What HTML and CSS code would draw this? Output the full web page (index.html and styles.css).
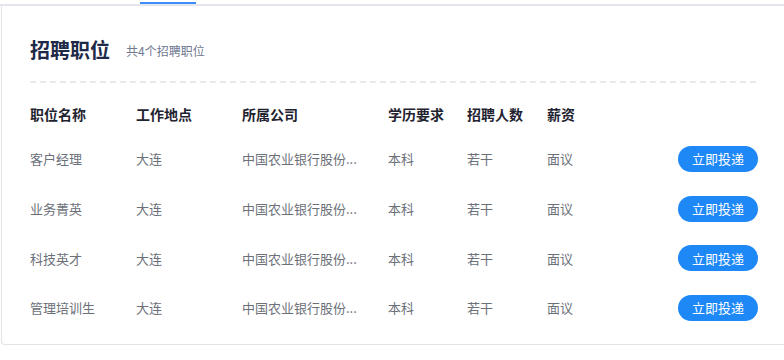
FILE: index.html
```html
<!DOCTYPE html>
<html lang="zh-CN">
<head>
<meta charset="utf-8">
<title>招聘职位</title>
<link rel="stylesheet" href="styles.css">
</head>
<body>
  <div class="tabbar">
    <span class="tab-indicator"></span>
  </div>
  <section class="card">
    <header class="card-head">
      <h2 class="card-title">招聘职位</h2>
      <span class="card-sub">共4个招聘职位</span>
    </header>
    <div class="divider"></div>
    <div class="jobs">
      <div class="row row-head">
        <span>职位名称</span>
        <span>工作地点</span>
        <span>所属公司</span>
        <span>学历要求</span>
        <span>招聘人数</span>
        <span>薪资</span>
        <span></span>
      </div>
      <div class="row">
        <span>客户经理</span>
        <span>大连</span>
        <span class="company" title="中国农业银行股份有限公司">中国农业银行股份...</span>
        <span>本科</span>
        <span>若干</span>
        <span>面议</span>
        <button class="apply">立即投递</button>
      </div>
      <div class="row">
        <span>业务菁英</span>
        <span>大连</span>
        <span class="company" title="中国农业银行股份有限公司">中国农业银行股份...</span>
        <span>本科</span>
        <span>若干</span>
        <span>面议</span>
        <button class="apply">立即投递</button>
      </div>
      <div class="row">
        <span>科技英才</span>
        <span>大连</span>
        <span class="company" title="中国农业银行股份有限公司">中国农业银行股份...</span>
        <span>本科</span>
        <span>若干</span>
        <span>面议</span>
        <button class="apply">立即投递</button>
      </div>
      <div class="row">
        <span>管理培训生</span>
        <span>大连</span>
        <span class="company" title="中国农业银行股份有限公司">中国农业银行股份...</span>
        <span>本科</span>
        <span>若干</span>
        <span>面议</span>
        <button class="apply">立即投递</button>
      </div>
    </div>
  </section>
</body>
</html>
```

FILE: styles.css
```css
* {
  box-sizing: border-box;
}

html, body {
  margin: 0;
  padding: 0;
  background: #fff;
  overflow: hidden;
}

body {
  font-family: "Noto Sans CJK SC", "Noto Sans", sans-serif;
  color: #333;
}

/* tab strip above the card */
.tabbar {
  height: 6px;
  padding-top: 2px;
  border-bottom: 2px solid #e4e6ef;
  padding-left: 140px;
}

.tab-indicator {
  display: block;
  width: 56px;
  height: 2px;
  background: #3d8ef7;
}

.card {
  width: 786px;
  margin-left: 1px;
  border: 1px solid #e3e3e3;
  border-top: none;
  border-radius: 0 0 4px 4px;
  padding: 30px 29px 11px 28px;
}

.card-head {
  display: flex;
  align-items: center;
  gap: 16px;
  height: 28px;
}

.card-title {
  margin: 0;
  font-size: 20px;
  line-height: 28px;
  font-weight: 700;
  color: #1e2a48;
}

.card-sub {
  font-size: 12px;
  color: #6f7890;
}

.divider {
  margin-top: 17px;
  height: 2px;
  width: 728px;
  background: repeating-linear-gradient(to right, #e7e9ed 0 6px, transparent 6px 10px);
}

.jobs {
  width: 728px;
  margin-top: 11px;
}

.row {
  display: grid;
  grid-template-columns: 106px 106px 146px 79px 80px 1fr 80px;
  align-items: center;
  height: 49.7px;
  font-size: 13px;
  color: #6c7079;
}

.row-head {
  height: 40px;
  font-size: 14px;
  font-weight: 700;
  color: #1f2330;
}

.company {
  font-family: "Noto Sans CJK SC", sans-serif;
  white-space: nowrap;
}

.apply {
  width: 80px;
  height: 26px;
  border: none;
  border-radius: 13px;
  background: #1e88f7;
  color: #fff;
  font-family: inherit;
  font-size: 13px;
  padding: 0;
  cursor: pointer;
}
```
